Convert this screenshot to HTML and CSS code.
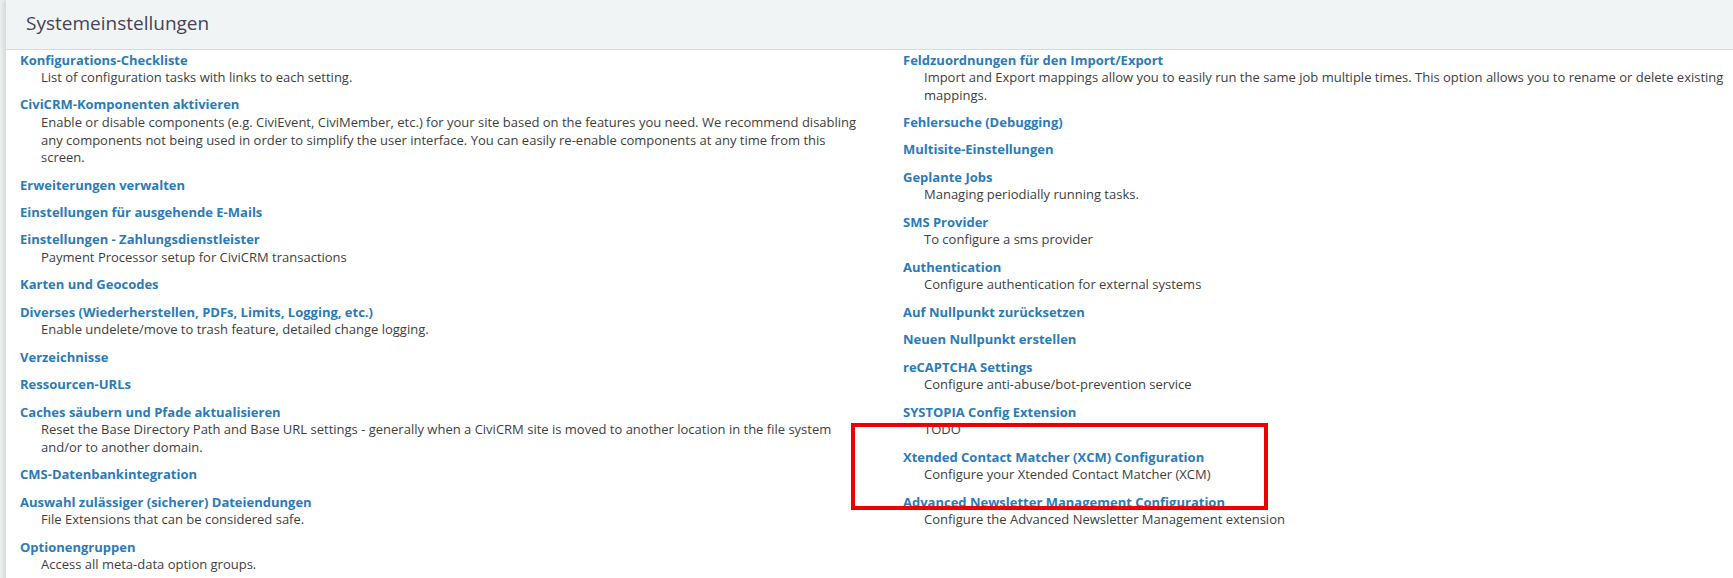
FILE: index.html
```html
<!DOCTYPE html>
<html lang="de">
<head>
<meta charset="utf-8">
<title>Systemeinstellungen</title>
<link rel="stylesheet" href="styles.css">
</head>
<body>
<div class="page">
  <div class="header"><h1 class="title">Systemeinstellungen</h1></div>
  <div class="columns">
    <dl class="col">
      <dt><a href="#">Konfigurations-Checkliste</a></dt>
      <dd>List of configuration tasks with links to each setting.</dd>
      <dt><a href="#">CiviCRM-Komponenten aktivieren</a></dt>
      <dd>Enable or disable components (e.g. CiviEvent, CiviMember, etc.) for your site based on the features you need. We recommend disabling any components not being used in order to simplify the user interface. You can easily re-enable components at any time from this screen.</dd>
      <dt><a href="#">Erweiterungen verwalten</a></dt>
      <dt><a href="#">Einstellungen für ausgehende E-Mails</a></dt>
      <dt><a href="#">Einstellungen - Zahlungsdienstleister</a></dt>
      <dd>Payment Processor setup for CiviCRM transactions</dd>
      <dt><a href="#">Karten und Geocodes</a></dt>
      <dt><a href="#">Diverses (Wiederherstellen, PDFs, Limits, Logging, etc.)</a></dt>
      <dd>Enable undelete/move to trash feature, detailed change logging.</dd>
      <dt><a href="#">Verzeichnisse</a></dt>
      <dt><a href="#">Ressourcen-URLs</a></dt>
      <dt><a href="#">Caches säubern und Pfade aktualisieren</a></dt>
      <dd>Reset the Base Directory Path and Base URL settings - generally when a CiviCRM site is moved to another location in the file system and/or to another domain.</dd>
      <dt><a href="#">CMS-Datenbankintegration</a></dt>
      <dt><a href="#">Auswahl zulässiger (sicherer) Dateiendungen</a></dt>
      <dd>File Extensions that can be considered safe.</dd>
      <dt><a href="#">Optionengruppen</a></dt>
      <dd>Access all meta-data option groups.</dd>
    </dl>
    <dl class="col">
      <dt><a href="#">Feldzuordnungen für den Import/Export</a></dt>
      <dd>Import and Export mappings allow you to easily run the same job multiple times. This option allows you to rename or delete existing mappings.</dd>
      <dt><a href="#">Fehlersuche (Debugging)</a></dt>
      <dt><a href="#">Multisite-Einstellungen</a></dt>
      <dt><a href="#">Geplante Jobs</a></dt>
      <dd>Managing periodially running tasks.</dd>
      <dt><a href="#">SMS Provider</a></dt>
      <dd>To configure a sms provider</dd>
      <dt><a href="#">Authentication</a></dt>
      <dd>Configure authentication for external systems</dd>
      <dt><a href="#">Auf Nullpunkt zurücksetzen</a></dt>
      <dt><a href="#">Neuen Nullpunkt erstellen</a></dt>
      <dt><a href="#">reCAPTCHA Settings</a></dt>
      <dd>Configure anti-abuse/bot-prevention service</dd>
      <dt><a href="#">SYSTOPIA Config Extension</a></dt>
      <dd>TODO</dd>
      <dt><a href="#">Xtended Contact Matcher (XCM) Configuration</a></dt>
      <dd>Configure your Xtended Contact Matcher (XCM)</dd>
      <dt><a href="#">Advanced Newsletter Management Configuration</a></dt>
      <dd>Configure the Advanced Newsletter Management extension</dd>
    </dl>
  </div>
</div>
<div class="highlight"></div>
</body>
</html>
```
FILE: styles.css
```css
html, body {
  margin: 0;
  padding: 0;
}
body {
  background: #eef1f2;
  font-family: "Open Sans", "DejaVu Sans", sans-serif;
  font-size: 13px;
  color: #3e3e3e;
  position: relative;
  min-height: 578px;
}
.page {
  margin-left: 6px;
  background: #ffffff;
  box-shadow: -3px 0 4px rgba(0, 0, 0, 0.10);
}
.header {
  height: 49px;
  background: #f1f4f5;
  border-bottom: 1px solid #d5dbde;
  display: flex;
  align-items: center;
  padding-left: 20px;
}
.title {
  margin: 0;
  font-size: 19px;
  font-weight: 400;
  color: #464354;
  line-height: 1;
  padding-bottom: 3px;
}
.columns {
  display: grid;
  grid-template-columns: 842px 1fr;
  column-gap: 41px;
  padding: 0.5px 5px 0 14px;
}
.col {
  margin: 0;
  padding: 0;
}
.col dt {
  font-weight: 700;
  line-height: 18.6px;
  margin-top: 8.8px;
}
.col dt:first-child {
  margin-top: 0;
}
.col dt a {
  color: #2b7bb9;
  text-decoration: none;
}
.col dd {
  margin: 0 0 0 21px;
  line-height: 17.6px;
}
.col dd:last-child {
  padding-bottom: 9px;
}
.highlight {
  position: absolute;
  left: 851px;
  top: 423px;
  width: 409px;
  height: 79px;
  border: 4.5px solid #ee0000;
}
```
